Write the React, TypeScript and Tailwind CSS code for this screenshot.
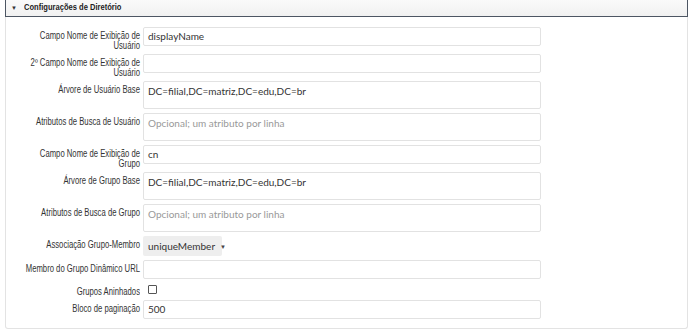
import React from 'react';

type Row = {
    label: string;
    kind: 'input' | 'textarea' | 'select' | 'checkbox';
    value?: string;
    placeholder?: string;
};

const rows: Row[] = [
    { label: 'Campo Nome de Exibição de Usuário', kind: 'input', value: 'displayName' },
    { label: '2º Campo Nome de Exibição de Usuário', kind: 'input', value: '' },
    { label: 'Árvore de Usuário Base', kind: 'textarea', value: 'DC=filial,DC=matriz,DC=edu,DC=br' },
    { label: 'Atributos de Busca de Usuário', kind: 'textarea', placeholder: 'Opcional; um atributo por linha' },
    { label: 'Campo Nome de Exibição de Grupo', kind: 'input', value: 'cn' },
    { label: 'Árvore de Grupo Base', kind: 'textarea', value: 'DC=filial,DC=matriz,DC=edu,DC=br' },
    { label: 'Atributos de Busca de Grupo', kind: 'textarea', placeholder: 'Opcional; um atributo por linha' },
    { label: 'Associação Grupo-Membro', kind: 'select', value: 'uniqueMember' },
    { label: 'Membro do Grupo Dinâmico URL', kind: 'input', value: '' },
    { label: 'Grupos Aninhados', kind: 'checkbox' },
    { label: 'Bloco de paginação', kind: 'input', value: '500' },
];

const labelFont = "font-['Liberation_Sans',Arial,sans-serif]";
const fieldFont = "font-['Lato','Open_Sans',sans-serif]";

const Field: React.FC<{ row: Row }> = ({ row }) => {
    const box = `w-[398px] border border-[#e2e2e2] rounded-[2px] bg-white pl-[4px] text-[10px] text-[#333] ${fieldFont}`;

    if (row.kind === 'input') {
        return (
            <div className={`${box} h-[19px] flex items-center`}>
                <span>{row.value}</span>
            </div>
        );
    }
    if (row.kind === 'textarea') {
        return (
            <div className={`${box} h-[28px] pt-[2px] leading-[14px]`}>
                {row.value ? <span>{row.value}</span> : <span className="text-[#999]">{row.placeholder}</span>}
            </div>
        );
    }
    if (row.kind === 'select') {
        return (
            <div className={`w-[79px] h-[20px] rounded-[2px] bg-[#eeeeee] flex items-center pl-[5px] gap-[5px] text-[10px] text-[#333] ${fieldFont}`}>
                <span>{row.value}</span>
                <span className="text-[6px] text-[#444]">▼</span>
            </div>
        );
    }
    return (
        <div className="h-[13px] flex items-center pl-[5px]">
            <div className="w-[9px] h-[9px] border border-[#555] rounded-[1px] bg-white" />
        </div>
    );
};

export default function App() {
    return (
        <div className="w-[690px] h-[330px] bg-white overflow-hidden">
            {/* cabeçalho da seção */}
            <div className="ml-[5px] w-[683px] h-[17px] border-x border-b border-[#4d5663] bg-gradient-to-b from-[#fafafa] to-[#f1f1f1] flex items-center pl-[5px] gap-[7px]">
                <span className="text-[6px] text-[#333]">▼</span>
                <span className={`text-[9px] font-bold text-[#222] origin-left scale-x-[0.84] whitespace-nowrap ${labelFont}`}>
                    Configurações de Diretório
                </span>
            </div>

            <div className="ml-[5px] w-[683px] h-[312px] border-x border-b border-[#e3e3e3] rounded-b-[3px] pt-[10px] flex flex-col gap-[4px]">
                {rows.map((row) => (
                    <div key={row.label} className="flex items-start gap-[3px]">
                        <div className="w-[134px] flex justify-end">
                            <div className={`w-[155px] shrink-0 origin-top-right scale-x-[0.77] pt-[4px] -mb-px text-right text-[10px] leading-[10px] text-[#333] ${labelFont}`}>
                                {row.label}
                            </div>
                        </div>
                        <Field row={row} />
                    </div>
                ))}
            </div>
        </div>
    );
}
